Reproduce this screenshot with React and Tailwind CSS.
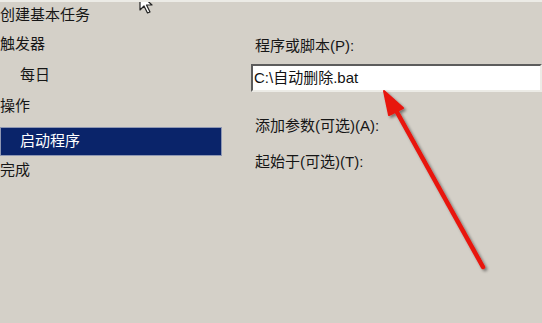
import React from 'react';

const font = { fontFamily: '"Liberation Sans", "Noto Sans CJK SC", sans-serif' };

const SideItem = ({ children, indent, className = '' }) => (
  <div className={`flex items-center text-[15px] text-[#161616] ${indent ? 'pl-[20px]' : 'pl-0'} ${className}`}>
    {children}
  </div>
);

export default function App() {
  return (
    <div
      className="relative w-[542px] h-[323px] overflow-hidden bg-[#d4d0c8] border-t-2 border-[#ecebe6]"
      style={font}
    >
      <div className="flex">
        {/* left steps list */}
        <div className="w-[222px] shrink-0 flex flex-col">
          <SideItem className="h-[27px]">创建基本任务</SideItem>
          <SideItem className="h-[31px]">触发器</SideItem>
          <SideItem indent className="h-[31px]">每日</SideItem>
          <SideItem className="h-[31px]">操作</SideItem>
          <div className="mt-[5px] h-[29px] flex items-center pl-[19px] bg-[#0a246a] border border-[#8e97b3] text-[15px] text-white">
            启动程序
          </div>
          <SideItem className="h-[29px]">完成</SideItem>
        </div>

        {/* right form */}
        <div className="ml-[29px] flex-1 flex flex-col">
          <div className="h-[30px] mt-[29px] flex items-center pl-[4px] text-[15px] text-[#161616]">
            程序或脚本(P):
          </div>
          <div className="mt-[3px] h-[28px] flex items-center bg-white border-2 border-t-[#5c5c5c] border-l-[#5c5c5c] border-b-[#ecebe6] border-r-[#ecebe6] pl-[1px] text-[15px] text-[#111]">
            C:\自动删除.bat
          </div>
          <div className="h-[30px] mt-[19px] flex items-center pl-[4px] text-[15px] text-[#161616]">
            添加参数(可选)(A):
          </div>
          <div className="h-[30px] mt-[6px] flex items-center pl-[4px] text-[15px] text-[#161616]">
            起始于(可选)(T):
          </div>
        </div>
      </div>

      {/* mouse cursor, mostly cut off at top */}
      <svg className="absolute left-[139px] top-[-9px]" width="20" height="24" viewBox="0 0 20 24">
        <path d="M1 1 L1 17 L5 13 L8.5 20 L11 19 L7.5 12 L13 12 Z" fill="#fff" stroke="#222" strokeWidth="1.2" strokeLinejoin="round" />
      </svg>

      {/* red annotation arrow */}
      <svg className="absolute left-0 top-0" width="542" height="323" viewBox="0 0 542 323">
        <defs>
          <filter id="sh" x="-20%" y="-20%" width="140%" height="140%">
            <feDropShadow dx="2" dy="2" stdDeviation="1.5" floodColor="#000" floodOpacity="0.45" />
          </filter>
        </defs>
        <g filter="url(#sh)">
          <line x1="483" y1="265" x2="393" y2="103" stroke="#e8140f" strokeWidth="4.5" strokeLinecap="round" />
          <polygon points="384,89 403,106 389,113" fill="#e8140f" stroke="#e8140f" strokeWidth="2" strokeLinejoin="round" />
        </g>
      </svg>
    </div>
  );
}
